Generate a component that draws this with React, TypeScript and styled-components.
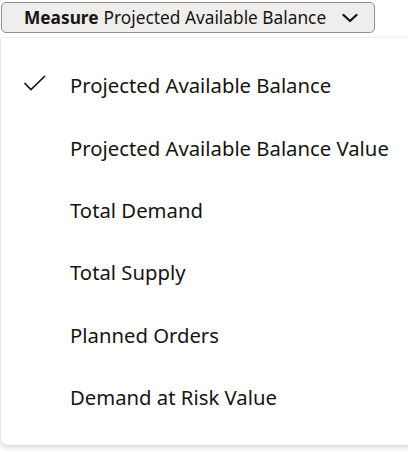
import React, { FC, useState } from 'react'
import styled, { createGlobalStyle } from 'styled-components'

const GlobalStyle = createGlobalStyle`
  html, body {
    margin: 0;
    padding: 0;
    background: #ffffff;
    font-family: 'Noto Sans', 'Liberation Sans', sans-serif;
    color: #161513;
  }
`

const MEASURES = [
  'Projected Available Balance',
  'Projected Available Balance Value',
  'Total Demand',
  'Total Supply',
  'Planned Orders',
  'Demand at Risk Value',
]

const Wrap = styled.div`
  position: relative;
  width: 408px;
  height: 454px;
  overflow: hidden;
`
const Trigger = styled.button`
  display: flex;
  align-items: center;
  gap: 16px;
  margin: 2px 0 0 1px;
  width: 374px;
  height: 31px;
  padding: 0 0 0 22px;
  border: 1px solid #8f8e8b;
  border-radius: 5px;
  background: #efeeed;
  font-family: inherit;
  font-size: 17.3px;
  color: #161513;
  cursor: pointer;
`
const TriggerLabel = styled.span`
  font-weight: 700;
  margin-right: 5px;
`
const Chevron = styled.svg`
  width: 16px;
  height: 16px;
  flex: none;
`
const Menu = styled.ul`
  position: absolute;
  top: 38px;
  left: 1px;
  width: 420px;
  height: 407px;
  margin: 0;
  padding: 16px 0 0;
  list-style: none;
  box-sizing: border-box;
  background: #ffffff;
  border-radius: 0 0 6px 6px;
  box-shadow: 0 2px 6px rgba(0, 0, 0, 0.18), 0 0 1px rgba(0, 0, 0, 0.2);
`
const Item = styled.li<{ isActive: boolean }>`
  display: flex;
  align-items: center;
  height: 62.4px;
  padding-left: 22px;
  font-size: 20.3px;
  cursor: pointer;
  white-space: nowrap;
`
const CheckSlot = styled.span`
  display: flex;
  width: 47px;
  flex: none;
`
const Check = styled.svg`
  width: 24px;
  height: 16px;
  margin-top: -5px;
`

const App: FC = () => {
  const [active, setActive] = useState(MEASURES[0])
  return (
    <Wrap>
      <GlobalStyle />
      <Trigger>
        <span>
          <TriggerLabel>Measure</TriggerLabel>
          {active}
        </span>
        <Chevron viewBox="0 0 16 16">
          <path d="M1.5 5 L8 11 L14.5 5" fill="none" stroke="#161513" strokeWidth="2.3" strokeLinecap="round" strokeLinejoin="round" />
        </Chevron>
      </Trigger>
      <Menu>
        {MEASURES.map(item => (
          <Item key={item} isActive={item === active} onClick={() => setActive(item)}>
            <CheckSlot>
              {item === active && (
                <Check viewBox="0 0 24 16">
                  <path d="M1.5 8 L8 14.5 L22 1" fill="none" stroke="#161513" strokeWidth="1.7" />
                </Check>
              )}
            </CheckSlot>
            {item}
          </Item>
        ))}
      </Menu>
    </Wrap>
  )
}

export default App
